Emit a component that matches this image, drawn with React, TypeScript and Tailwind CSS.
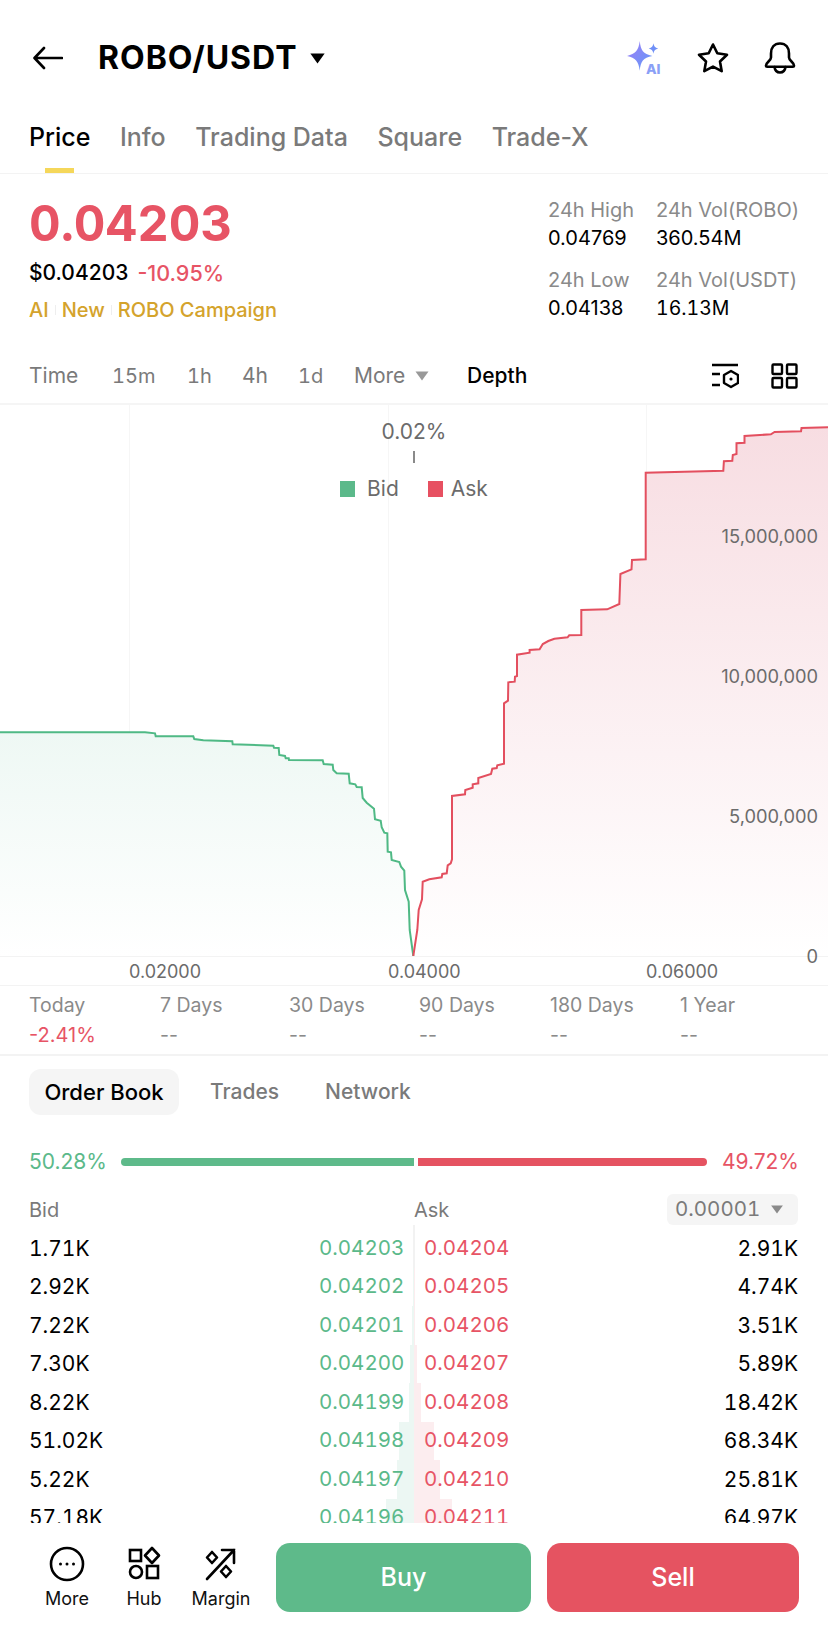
const ASK = [[413.3,956],[417.3,930],[418.7,910],[422,899.3],[422.7,881.7],[429.3,879.3],[441.7,877.3],[442.3,874],[446.7,873.3],[447.7,865.3],[450.7,863.3],[452,859.3],[452,796],[465,794.3],[465.3,790],[472.7,787.7],[472.7,784.3],[478.3,783.3],[478.3,778],[491,774],[492.3,768.7],[496.7,768],[497.3,765.3],[504,763.7],[504,703.3],[508,700.7],[508.3,682.3],[514.7,681.7],[515,676.7],[517,676],[517,654.7],[529.6,652.7],[529.6,650],[539.6,649.3],[542.8,644],[548.3,641],[554.4,638.7],[567.6,637.3],[569.2,635.3],[581.3,635],[581.3,610],[607.2,609.3],[619.3,604],[620.4,574],[631.5,569.3],[632,560],[645.7,559.3],[645.7,472.7],[723.3,470.7],[723.9,461.3],[732.3,460.7],[732.8,455],[736.5,454],[736.5,443.3],[744.5,442.7],[744.5,436],[770.9,434.3],[774.6,432],[801,431.3],[801.5,428],[828,427.3]]

const BID = [[0,732.3],[145,732.3],[155,733.3],[155.7,736.3],[193.3,736.3],[194.3,739],[203.3,740.3],[232.3,741.3],[232.7,744.3],[273.3,745.7],[274,747.7],[278.7,748],[279.3,755],[285,756],[285.7,758.3],[288.7,758.3],[289,760],[322.7,760.3],[323.7,764],[332.7,764.7],[333.3,770],[336.7,773.3],[348.7,773.7],[349.7,783.3],[355.3,784.3],[356.7,787],[361.7,787.3],[362.7,798],[366.7,802.7],[374,808.7],[375,819.3],[380.7,820.7],[381.7,827.3],[384.3,832.7],[387.3,833.3],[387.7,851.7],[391,852.3],[391.7,860],[399.3,862],[401,866.7],[404.3,870.7],[405,890],[408.7,901.7],[409.7,930],[413.3,956]]

const toPath = (pts: number[][]) => pts.map(([x, y], i) => `${i ? 'L' : 'M'}${x} ${y}`).join(' ')

const TABS = ['Info', 'Trading Data', 'Square', 'Trade-X']
const PERIODS = [
  ['Today', '-2.41%'],
  ['7 Days', '--'],
  ['30 Days', '--'],
  ['90 Days', '--'],
  ['180 Days', '--'],
  ['1 Year', '--'],
]
const ROWS = [
  ['1.71K', '0.04203', '0.04204', '2.91K', 0, 0],
  ['2.92K', '0.04202', '0.04205', '4.74K', 1, 1],
  ['7.22K', '0.04201', '0.04206', '3.51K', 2, 1],
  ['7.30K', '0.04200', '0.04207', '5.89K', 4, 3],
  ['8.22K', '0.04199', '0.04208', '18.42K', 5, 7],
  ['51.02K', '0.04198', '0.04209', '68.34K', 15, 20],
  ['5.22K', '0.04197', '0.04210', '25.81K', 17, 26],
  ['57.18K', '0.04196', '0.04211', '64.97K', 28, 38],
] as const

function Caret({ className }: { className: string }) {
  return (
    <svg viewBox="0 0 14 10" className={className}>
      <path d="M0.5 0.5H13.5L7 9.5Z" fill="currentColor" />
    </svg>
  )
}

function TopIcons() {
  return (
    <div className="flex items-center">
      <svg width="38" height="36" viewBox="0 0 36 34" className="mr-[32px]">
        <defs>
          <linearGradient id="ai" x1="0" y1="0" x2="1" y2="1">
            <stop offset="0" stopColor="#a07cf6" />
            <stop offset="1" stopColor="#5f9bf8" />
          </linearGradient>
        </defs>
        <path d="M13 1C14 10 16 13 25 15C16 17 14 20 13 29C12 20 9 17 1 15C9 13 12 10 13 1Z" fill="url(#ai)" />
        <path d="M26 3C26.500 6 27.500 7 30.500 8C27.500 9 26.500 10 26 13C25.500 10 24.500 9 21.500 8C24.500 7 25.500 6 26 3Z" fill="#6f8ff7" />
        <text x="19" y="32" fontSize="13" fontWeight="800" fill="#8aa0f6" fontFamily="Inter, sans-serif">AI</text>
      </svg>
      <svg width="34" height="32" viewBox="0 0 34 32" className="mr-[34px]" fill="none" stroke="#000" strokeWidth="2.600" strokeLinejoin="round">
        <path d="M17 2.500L21.300 11.300L31 12.700L24 19.500L25.700 29.200L17 24.600L8.300 29.200L10 19.500L3 12.700L12.700 11.300Z" />
      </svg>
      <svg width="32" height="32" viewBox="0 0 32 32" className="mr-[32px]" fill="none" stroke="#000" strokeWidth="2.600" strokeLinejoin="round" strokeLinecap="round">
        <path d="M16 1.500C10 1.500 7 6 7 11.500V15.500C7 18.500 2 20.500 2 23.500C2 24.300 2.500 24.700 3.300 24.700H28.700C29.500 24.700 30 24.300 30 23.500C30 20.500 25 18.500 25 15.500V11.500C25 6 22 1.500 16 1.500Z" />
        <path d="M10.500 25C11 28.500 13 30.500 16 30.500C19 30.500 21 28.500 21.500 25" />
      </svg>
    </div>
  )
}

function DepthChart() {
  return (
    <div className="relative h-[552px] shrink-0 border-b border-[#f3f3f3]">
      <svg viewBox="0 405 828 551" className="absolute inset-0 h-full w-full">
        <defs>
          <linearGradient id="askFill" gradientUnits="userSpaceOnUse" x1="0" y1="410" x2="0" y2="956">
            <stop offset="0" stopColor="#f7dce1" />
            <stop offset="1" stopColor="#ffffff" />
          </linearGradient>
          <linearGradient id="bidFill" gradientUnits="userSpaceOnUse" x1="0" y1="732" x2="0" y2="956">
            <stop offset="0" stopColor="#eef8f4" />
            <stop offset="1" stopColor="#ffffff" />
          </linearGradient>
        </defs>
        {[129.500, 388.500, 646.500].map((x) => (
          <line key={x} x1={x} x2={x} y1="405" y2="956" stroke="#f6f6f6" />
        ))}
        <path d={`${toPath(BID)} L0 956 Z`} fill="url(#bidFill)" />
        <path d={`${toPath(ASK)} L828 956 Z`} fill="url(#askFill)" />
        <path d={toPath(BID)} fill="none" stroke="#4fb985" strokeWidth="2" />
        <path d={toPath(ASK)} fill="none" stroke="#e34f5f" strokeWidth="2" />
      </svg>

      {/* mid price + legend */}
      <div className="absolute top-[13px] left-0 w-full flex flex-col items-center text-[#6b6b6b]">
        <span className="text-[21px] leading-[28px]">0.02%</span>
        <span className="mt-[5px] h-[12px] w-[2px] bg-[#8a8a8a]" />
        <div className="mt-[12px] flex items-center text-[21px] leading-[28px]">
          <span className="h-[16px] w-[15px] bg-[#5bb98a]" />
          <span className="ml-[12px]">Bid</span>
          <span className="ml-[29px] h-[16px] w-[15px] bg-[#e75061]" />
          <span className="ml-[8px]">Ask</span>
        </div>
      </div>

      <span className="absolute right-[10px] top-[119px] text-[18.300px] leading-[24px] text-[#6b6b6b]">15,000,000</span>
      <span className="absolute right-[10px] top-[259px] text-[18.300px] leading-[24px] text-[#6b6b6b]">10,000,000</span>
      <span className="absolute right-[10px] top-[399px] text-[18.300px] leading-[24px] text-[#6b6b6b]">5,000,000</span>
      <span className="absolute right-[10px] top-[539px] text-[18.300px] leading-[24px] text-[#6b6b6b]">0</span>
    </div>
  )
}

function BottomBar() {
  return (
    <div className="flex h-[108px] shrink-0 bg-white pl-[29px] pt-[20px]">
      <div className="flex w-[247px] shrink-0 text-[18px] leading-[24px] text-[#111]">
        <div className="flex w-[76px] flex-col items-center">
          <svg width="36" height="36" viewBox="0 0 36 36" fill="none" stroke="#000" strokeWidth="2.600" className="mt-[3px]">
            <circle cx="18" cy="18" r="16" />
            <circle cx="11.500" cy="18" r="1.500" fill="#000" stroke="none" />
            <circle cx="18" cy="18" r="1.500" fill="#000" stroke="none" />
            <circle cx="24.500" cy="18" r="1.500" fill="#000" stroke="none" />
          </svg>
          <span className="mt-[5px]">More</span>
        </div>
        <div className="flex w-[78px] flex-col items-center">
          <svg width="34" height="36" viewBox="0 0 34 36" fill="none" stroke="#000" strokeWidth="2.600" className="mt-[3px]">
            <rect x="3" y="4" width="11" height="11" />
            <path d="M25 2L32 9.500L25 17L18 9.500Z" strokeLinejoin="round" />
            <circle cx="9" cy="26" r="6" />
            <rect x="20" y="20" width="11" height="12" />
          </svg>
          <span className="mt-[5px]">Hub</span>
        </div>
        <div className="flex w-[76px] flex-col items-center">
          <svg width="34" height="36" viewBox="0 0 34 36" fill="none" stroke="#000" strokeWidth="2.600" strokeLinecap="round" className="mt-[3px]">
            <path d="M3 33L30 4M18 4H30V17" />
            <path d="M8 6L13 11.500L8 17L3 11.500Z" strokeLinejoin="round" />
            <path d="M22 20L27 25.500L22 31L17 25.500Z" strokeLinejoin="round" />
          </svg>
          <span className="mt-[5px]">Margin</span>
        </div>
      </div>
      <button className="h-[69px] w-[255px] rounded-[14px] bg-[#5eba8a] text-[25px] font-medium text-white">Buy</button>
      <button className="ml-[16px] h-[69px] w-[252px] rounded-[14px] bg-[#e55361] text-[25px] font-medium text-white">Sell</button>
    </div>
  )
}

export default function App() {
  return (
    <div className="flex h-[1631px] w-[828px] flex-col overflow-hidden bg-white font-['Inter',sans-serif] text-black">
      {/* Header */}
      <div className="flex h-[116px] shrink-0 items-center justify-between pl-[33px]">
        <div className="flex items-center">
          <svg width="30" height="24" viewBox="0 0 30 24" fill="none" stroke="#000" strokeWidth="2.600" strokeLinecap="round" strokeLinejoin="round">
            <path d="M29 12H2M11 2L1.500 12L11 22" />
          </svg>
          <span className="ml-[35px] text-[32px] font-bold leading-[40px] tracking-[1px]">ROBO/USDT</span>
          <Caret className="ml-[12px] h-[11px] w-[17px] text-black" />
        </div>
        <TopIcons />
      </div>

      {/* Tabs */}
      <div className="relative flex h-[58px] shrink-0 gap-[29.500px] border-b border-[#f3f3f3] pl-[29px] pt-[6px] text-[25px] leading-[30px] font-medium text-[#7a7a7a]">
        <span className="text-black">Price</span>
        {TABS.map((t) => (
          <span key={t}>{t}</span>
        ))}
        <span className="absolute bottom-0 left-[45px] h-[5px] w-[29px] bg-[#f5d75a]" />
      </div>

      {/* Price + stats */}
      <div className="flex h-[174px] shrink-0 justify-between pl-[29px]">
        <div className="pt-[24px]">
          <div className="text-[49px] font-bold leading-[52px] tabular-nums text-[#e75465]">0.04203</div>
          <div className="mt-[8px] flex text-[21px] font-medium leading-[30px]">
            <span>$0.04203</span>
            <span className="ml-[9px] text-[21.500px] text-[#e75465]">-10.95%</span>
          </div>
          <div className="mt-[7px] flex items-center text-[20px] font-medium leading-[30px] text-[#d4a32c]">
            <span>AI</span>
            <span className="mx-[6px] h-[10px] w-px bg-[#eee]" />
            <span>New</span>
            <span className="mx-[6px] h-[10px] w-px bg-[#eee]" />
            <span>ROBO Campaign</span>
          </div>
        </div>
        <div className="grid w-[280px] grid-cols-[108px_1fr] content-start gap-y-[15px] pt-[23px] text-[20px] leading-[27px]">
          <div>
            <div className="text-[#8a8a8a]">24h High</div>
            <div className="mt-px">0.04769</div>
          </div>
          <div>
            <div className="text-[#8a8a8a]">24h Vol(ROBO)</div>
            <div className="mt-px">360.54M</div>
          </div>
          <div>
            <div className="text-[#8a8a8a]">24h Low</div>
            <div className="mt-px">0.04138</div>
          </div>
          <div>
            <div className="text-[#8a8a8a]">24h Vol(USDT)</div>
            <div className="mt-px text-[19.500px] tabular-nums">16.13M</div>
          </div>
        </div>
      </div>

      {/* Timeframes */}
      <div className="flex h-[57px] shrink-0 items-center border-b-2 border-[#f5f5f5] pl-[29px] pr-[30px] text-[21px] text-[#7a7a7a]">
        <span className="w-[83px]">Time</span>
        <span className="w-[75px] text-[20px] tabular-nums">15m</span>
        <span className="w-[55px] text-[20px] tabular-nums">1h</span>
        <span className="w-[56px]">4h</span>
        <span className="w-[56px] text-[20px] tabular-nums">1d</span>
        <span className="w-[61px]">More</span>
        <Caret className="h-[10px] w-[14px] text-[#999]" />
        <span className="ml-[38px] font-medium text-black">Depth</span>
        <div className="ml-auto flex items-center gap-[32px]">
          <svg width="28" height="26" viewBox="0 0 28 26" fill="none" stroke="#000" strokeWidth="2.400">
            <path d="M1 2H27M1 11H9M1 22H9" />
            <path d="M20 8L27 12V20L20 24L13 20V12Z" strokeLinejoin="round" />
            <circle cx="20" cy="16" r="1.600" fill="#000" stroke="none" />
          </svg>
          <svg width="27" height="26" viewBox="0 0 27 26" fill="none" stroke="#000" strokeWidth="2.400">
            <rect x="1.500" y="1.500" width="9.500" height="9.500" rx="1" />
            <rect x="16" y="1.500" width="9.500" height="9.500" rx="1" />
            <rect x="1.500" y="15" width="9.500" height="9.500" rx="1" />
            <rect x="16" y="15" width="9.500" height="9.500" rx="1" />
          </svg>
        </div>
      </div>

      <DepthChart />

      {/* X axis */}
      <div className="flex h-[29px] shrink-0 items-center border-b border-[#f3f3f3] pl-[129px] text-[18px] text-[#6b6b6b]">
        <span className="w-[259px]">0.02000</span>
        <span className="w-[258px]">0.04000</span>
        <span>0.06000</span>
      </div>

      {/* Period change */}
      <div className="grid h-[70px] shrink-0 grid-cols-[131px_129px_130px_131px_130px_1fr] content-start border-b-2 border-[#f3f3f3] pl-[29px] pt-[4px] text-[19.500px] leading-[30px] text-[#8a8a8a]">
        {PERIODS.map(([label, val]) => (
          <div key={label}>
            <div>{label}</div>
            <div className={val === '--' ? '' : 'text-[20px] text-[#e75465]'}>{val}</div>
          </div>
        ))}
      </div>

      {/* Book tabs */}
      <div className="mt-[13px] flex h-[46px] shrink-0 items-center pl-[29px] text-[21px] font-medium text-[#7a7a7a]">
        <span className="flex h-full w-[150px] items-center justify-center rounded-[12px] bg-[#f5f5f5] text-[22px] text-black">Order Book</span>
        <span className="ml-[31px]">Trades</span>
        <span className="ml-[46px]">Network</span>
      </div>

      {/* Ratio */}
      <div className="mt-[32px] flex h-[30px] shrink-0 items-center pl-[29px] pr-[29px] text-[21px]">
        <span className="w-[92px] text-[#5bb98a]">50.28%</span>
        <span className="h-[8px] w-[293px] rounded-l-full bg-[#5eba8a]" />
        <span className="ml-[4px] h-[8px] w-[289px] rounded-r-full bg-[#e55361]" />
        <span className="ml-auto text-[#e75465]">49.72%</span>
      </div>

      {/* Book header */}
      <div className="mt-[17px] flex h-[31px] shrink-0 items-center pl-[29px] pr-[30px] text-[20px] text-[#7a7a7a]">
        <span className="w-[385px]">Bid</span>
        <span>Ask</span>
        <span className="ml-auto flex h-full w-[131px] items-center gap-[10px] rounded-[6px] bg-[#f5f5f5] pl-[8px] text-[20.500px] tabular-nums">
          0.00001
          <Caret className="h-[9px] w-[14px] text-[#8a8a8a]" />
        </span>
      </div>

      {/* Book rows */}
      <div className="relative min-h-0 flex-1 overflow-hidden pl-[29px] pr-[30px] pt-[4px] text-[21px] tabular-nums">
        <span className="absolute left-[413px] top-0 h-full w-[2px] bg-[#f2f2f2]" />
        {ROWS.map(([bid, bp, ap, ask, lw, rw]) => (
          <div key={bp} className="relative flex h-[38.500px] items-center">
            <span className="absolute top-0 h-full bg-[#ecf7f3]" style={{ right: 384, width: lw }} />
            <span className="absolute top-0 h-full bg-[#fcedef]" style={{ left: 385, width: rw }} />
            <span className="relative w-[290px]">{bid}</span>
            <span className="relative w-[84px] text-[20.500px] text-[#5bb98a]">{bp}</span>
            <span className="relative ml-[21px] text-[20.500px] text-[#e75465]">{ap}</span>
            <span className="relative ml-auto">{ask}</span>
          </div>
        ))}
      </div>

      <BottomBar />
    </div>
  )
}
